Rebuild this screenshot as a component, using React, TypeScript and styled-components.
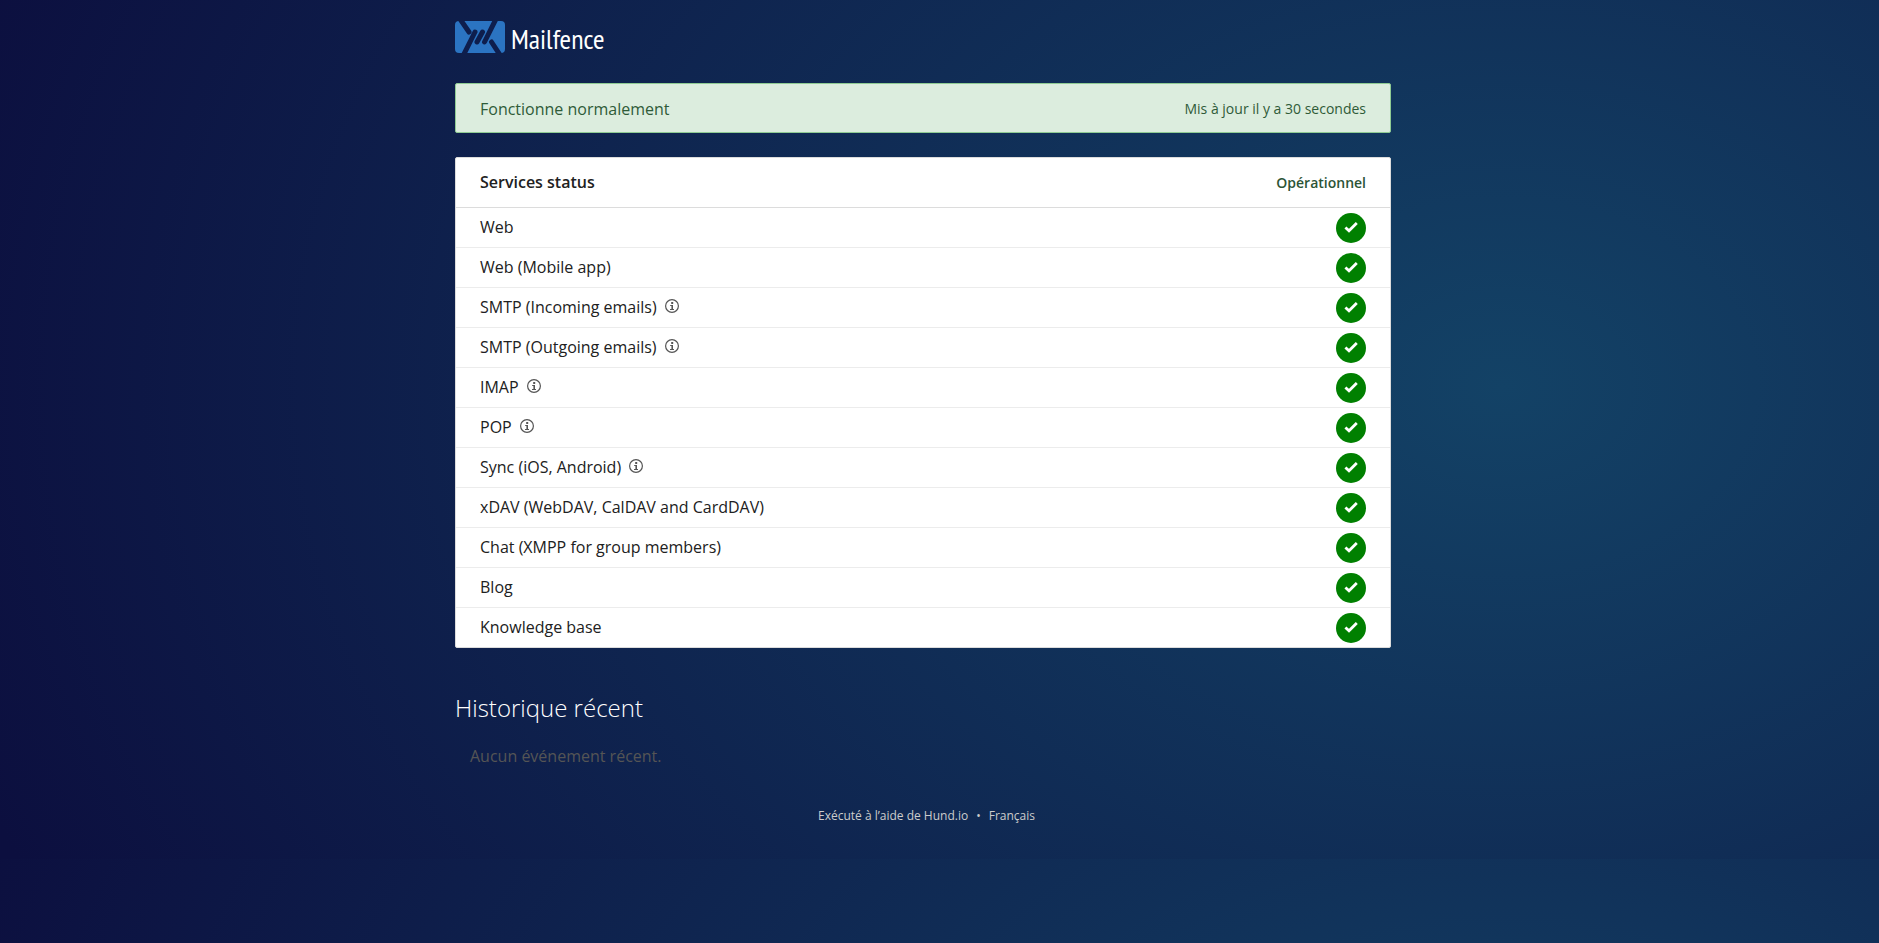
import React from 'react';
import styled, { createGlobalStyle } from 'styled-components';

const GlobalStyle = createGlobalStyle`
  * { box-sizing: border-box; }
  body {
    margin: 0;
    font: 400 16px/24px "Open Sans", sans-serif;
    color: #212121;
    background: radial-gradient(86% 140% at 80% 45%, #134266, #0c0f3f);
  }
  a { color: inherit; text-decoration: none; }
`;

const Page = styled.div`
  padding: 20px 33px 31px 0;
`;

const Container = styled.div`
  max-width: 936px;
  margin: 0 auto;
`;

const Logo = styled.a`
  display: flex;
  width: 152px;
  height: 34px;
  margin-bottom: 29px;
`;

const Panel = styled.section`
  margin-bottom: 24px;
  background: #fff;
  border: 1px solid #dcdcdc;
  border-radius: 2px;
`;

const Banner = styled(Panel)`
  display: flex;
  align-items: center;
  justify-content: space-between;
  height: 50px;
  padding: 2px 24px 0;
  color: #2f5b38;
  background: #dcedde;
  border-color: #8fcb93;
`;

const Updated = styled.time`
  font-size: 14px;
`;

const PanelHead = styled.header`
  display: flex;
  align-items: center;
  justify-content: space-between;
  height: 50px;
  padding: 0 24px;
  border-bottom: 1px solid #dcdcdc;
`;

const PanelTitle = styled.h2`
  margin: 0;
  padding-bottom: 2px;
  font-size: 16px;
  font-weight: 600;
`;

const State = styled.span`
  font-size: 14px;
  font-weight: 600;
  color: #2c5436;
`;

const List = styled.ul`
  margin: 0;
  padding: 0;
  list-style: none;
`;

const Row = styled.li`
  display: flex;
  align-items: center;
  height: 40px;
  padding: 0 24px;
  border-bottom: 1px solid #ececec;
  &:last-child {
    height: 39px;
    border-bottom: 0;
  }
`;

const Name = styled.span`
  padding-bottom: 1px;
`;

const Info = styled.button`
  display: flex;
  margin: 0 0 3px 8px;
  padding: 0;
  border: 0;
  background: none;
  color: #555;
`;

const Badge = styled.span`
  display: flex;
  align-items: center;
  justify-content: center;
  width: 30px;
  height: 30px;
  margin-left: auto;
  border-radius: 50%;
  background: #008000;
`;

const HistoryTitle = styled.h2`
  margin: 42px 0 18px;
  font-size: 24px;
  line-height: 36px;
  font-weight: 300;
  color: #fff;
`;

const Empty = styled.p`
  margin: 0 0 36px;
  padding-left: 15px;
  color: #555;
`;

const Footer = styled.footer`
  display: flex;
  justify-content: center;
  gap: 8px;
  padding-left: 7px;
  font-size: 12px;
  color: #ccc;
`;

const services = [
  { name: 'Web' },
  { name: 'Web (Mobile app)' },
  { name: 'SMTP (Incoming emails)', info: true },
  { name: 'SMTP (Outgoing emails)', info: true },
  { name: 'IMAP', info: true },
  { name: 'POP', info: true },
  { name: 'Sync (iOS, Android)', info: true },
  { name: 'xDAV (WebDAV, CalDAV and CardDAV)' },
  { name: 'Chat (XMPP for group members)' },
  { name: 'Blog' },
  { name: 'Knowledge base' },
];

const LogoMark = () => (
  <svg width="152" height="34" viewBox="0 0 152 34" overflow="visible" role="img" aria-label="Mailfence">
    <clipPath id="envelope"><rect x="0" y="1" width="50" height="32" rx="4" /></clipPath>
    <g clipPath="url(#envelope)">
      <rect y="1" width="50" height="32" fill="#2b74c2" />
      <path
        d="M5 -1 L14 12 M8 36 L20 12 M22 22 L27.5 12 M29.5 22 L41 -1 M36.5 22 L45 35"
        stroke="#0e1e4d"
        strokeWidth="5"
        strokeLinecap="round"
        fill="none"
      />
    </g>
    <text x="56" y="29" fill="#fff" fontFamily="'PT Sans Narrow', 'Open Sans Condensed', 'Liberation Sans Narrow', 'Open Sans', sans-serif" fontSize="28">Mailfence</text>
  </svg>
);

const InfoIcon = () => (
  <svg width="14" height="14" viewBox="0 0 14 14" fill="none" stroke="currentColor">
    <circle cx="7" cy="7" r="6.4" strokeWidth="1.2" />
    <path d="M5.2 6.5h1.8M5 10.5h4" />
    <path d="M7.2 6v5" strokeWidth="1.6" />
    <rect x="6.2" y="3" width="2" height="2" fill="currentColor" stroke="none" />
  </svg>
);

const CheckIcon = () => (
  <svg width="14" height="14" viewBox="0 0 14 14" fill="none" stroke="#fff" strokeWidth="2.8">
    <path d="M1.4 6.4 L5 9.8 L12.8 2" />
  </svg>
);

export default function App() {
  return (
    <>
      <GlobalStyle />
      <Page>
        <Container>
          <Logo href="#"><LogoMark /></Logo>
          <main>
            <Banner>
              <span>Fonctionne normalement</span>
              <Updated>Mis à jour il y a 30 secondes</Updated>
            </Banner>
            <Panel>
              <PanelHead>
                <PanelTitle>Services status</PanelTitle>
                <State>Opérationnel</State>
              </PanelHead>
              <List>
                {services.map(({ name, info }) => (
                  <Row key={name}>
                    <Name>{name}</Name>
                    {info && <Info type="button" aria-label={`Info ${name}`}><InfoIcon /></Info>}
                    <Badge><CheckIcon /></Badge>
                  </Row>
                ))}
              </List>
            </Panel>
            <HistoryTitle>Historique récent</HistoryTitle>
            <Empty>Aucun événement récent.</Empty>
          </main>
          <Footer>
            <a href="#">Exécuté à l’aide de Hund.io</a>
            <span>•</span>
            <a href="#">Français</a>
          </Footer>
        </Container>
      </Page>
    </>
  );
}
